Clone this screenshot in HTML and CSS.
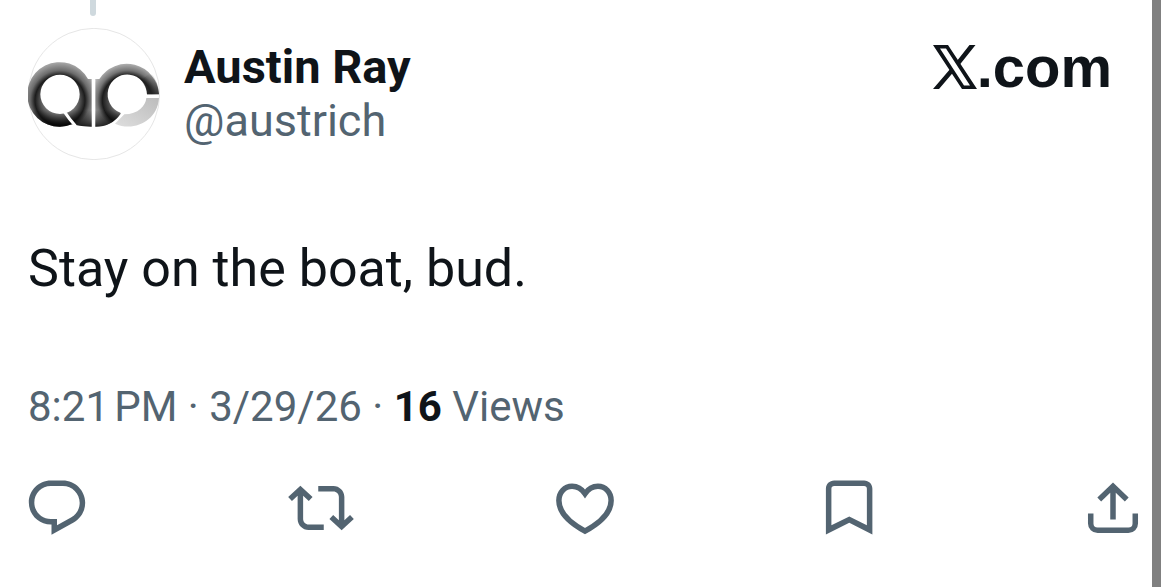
FILE: index.html
```
<!DOCTYPE html>
<html lang="en">
<head>
  <meta charset="UTF-8">
  <meta name="viewport" content="width=device-width, initial-scale=1.0">
  <title>Post</title>
  <link rel="stylesheet" href="styles.css">
</head>
<body>
  <article class="post">
    <div class="thread-line"></div>
    <header class="post-header">
      <svg class="avatar" viewBox="84 84 396 396" aria-hidden="true">
        <defs>
          <radialGradient id="ring-left" gradientUnits="userSpaceOnUse" cx="180" cy="301" r="125">
            <stop offset="0.32" stop-color="#8a8a8a"/>
            <stop offset="0.46" stop-color="#5a5a5a"/>
            <stop offset="0.6" stop-color="#1c1c1c"/>
            <stop offset="0.72" stop-color="#6c6c6c"/>
            <stop offset="0.9" stop-color="#a4a4a4"/>
          </radialGradient>
          <radialGradient id="ring-right" gradientUnits="userSpaceOnUse" cx="382" cy="301" r="125">
            <stop offset="0.32" stop-color="#808080"/>
            <stop offset="0.46" stop-color="#4a4a4a"/>
            <stop offset="0.6" stop-color="#1c1c1c"/>
            <stop offset="0.72" stop-color="#747474"/>
            <stop offset="0.9" stop-color="#b8b8b8"/>
          </radialGradient>
          <linearGradient id="shade" gradientUnits="userSpaceOnUse" x1="0" y1="330" x2="0" y2="382">
            <stop offset="0" stop-color="#000" stop-opacity="0"/>
            <stop offset="1" stop-color="#000" stop-opacity="0.85"/>
          </linearGradient>
          <linearGradient id="shade-side" gradientUnits="userSpaceOnUse" x1="0" y1="220" x2="0" y2="283">
            <stop offset="0" stop-color="#222" stop-opacity="0"/>
            <stop offset="1" stop-color="#222" stop-opacity="0.8"/>
          </linearGradient>
          <linearGradient id="tail" x1="0" y1="1" x2="1" y2="0">
            <stop offset="0" stop-color="#dedede"/>
            <stop offset="1" stop-color="#bcbcbc"/>
          </linearGradient>
          <path id="a" fill-rule="evenodd" d="M275 380V237H264A97 97 0 1 0 216 373Q244 380 275 380ZM239 283A59 59 0 1 1 121 283A59 59 0 1 1 239 283Z"/>
          <path id="c" d="M286 380V237H298A97 97 0 0 1 477 283H441A59 59 0 1 0 361 338L362 341Q335 380 286 380Z"/>
        </defs>
        <circle cx="282" cy="282" r="197" fill="#fff" stroke="#e6e6e6" stroke-width="3"/>
        <use href="#a" fill="url(#ring-left)"/>
        <use href="#a" fill="url(#shade)"/>
        <path fill="none" stroke="#fff" stroke-width="9" d="M193 335Q208 358 226 377"/>
        <use href="#c" fill="url(#ring-right)"/>
        <use href="#c" fill="url(#shade)"/>
        <path fill="url(#shade-side)" d="M422 240Q440 260 441 283H477Q475 245 453 218Z"/>
        <path fill="url(#tail)" d="M477 294H439C437 317 415 343 373 343L345 371C400 396 472 365 477 294Z"/>
      </svg>
      <div class="author">
        <a class="author-name" href="#">Austin Ray</a>
        <a class="author-handle" href="#">@austrich</a>
      </div>
      <a class="brand" href="#" aria-label="X.com">
        <svg class="brand-mark" viewBox="0 0 44 44" aria-hidden="true">
          <path fill-rule="evenodd" d="M0 0H15L44 44H29ZM7 3.5L31 40.5H37L13 3.5Z"/>
          <path d="M36.500 0H42.500L26.500 20L23.500 16.500ZM0 44H6L20.500 27L18 23Z"/>
        </svg>
        <span>.com</span>
      </a>
    </header>
    <p class="post-text">Stay on the boat, bud.</p>
    <p class="post-meta"><time>8:21&#8239;PM · 3/29/26</time> · <strong>16</strong> Views</p>
    <div class="actions">
      <button class="action" type="button" aria-label="Reply">
        <svg viewBox="0 0 24 24"><path d="M1.751 10c0-4.420 3.584-8 8.005-8h4.366c4.490 0 8.129 3.640 8.129 8.130 0 2.960-1.607 5.680-4.196 7.110l-8.054 4.460v-3.690h-.067c-4.490.1-8.183-3.510-8.183-8.010zm8.005-6c-3.317 0-6.005 2.690-6.005 6 0 3.370 2.770 6.080 6.138 6.010l.351-.010h1.761v2.300l5.087-2.810c1.951-1.080 3.163-3.130 3.163-5.360 0-3.390-2.744-6.130-6.129-6.130H9.756z"/></svg>
      </button>
      <button class="action" type="button" aria-label="Repost">
        <svg viewBox="0 0 24 24"><path d="M4.500 3.880l4.432 4.140-1.364 1.460L5.500 7.550V16c0 1.100.896 2 2 2H13v2H7.500c-2.209 0-4-1.790-4-4V7.550L1.432 9.480.068 8.020 4.500 3.880zM16.500 6H11V4h5.500c2.209 0 4 1.790 4 4v8.450l2.068-1.930 1.364 1.460-4.432 4.140-4.432-4.140 1.364-1.460 2.068 1.930V8c0-1.100-.896-2-2-2z"/></svg>
      </button>
      <button class="action" type="button" aria-label="Like">
        <svg class="outline" viewBox="0 0 24 24"><path d="M12 6.800C10.700 4.900 9.100 4.100 7.300 4.100 4.600 4.100 2.500 6.300 2.500 9.300c0 4.600 4.700 8.500 9.500 11.100 4.800-2.600 9.500-6.500 9.500-11.100 0-3-2.100-5.200-4.800-5.200-1.800 0-3.400.8-4.700 2.700z"/></svg>
      </button>
      <button class="action" type="button" aria-label="Bookmark">
        <svg viewBox="0 0 24 24"><path d="M3.600 5c0-1.700 1.300-3 3-3h10.900c1.700 0 3 1.300 3 3v16.600l-8.400-4.200-8.500 4.200V5zm3-1c-.6 0-1 .4-1 1v13.300l6.500-3.200 6.400 3.200V5c0-.6-.4-1-1-1H6.600z"/></svg>
      </button>
      <button class="action" type="button" aria-label="Share">
        <svg class="outline" viewBox="0 0 24 24"><path d="M12 16.200V4.200M7 8.900l5-4.800 5 4.800M3.900 14v3.600c0 1.400 1.100 2.500 2.500 2.500h11.200c1.400 0 2.500-1.100 2.500-2.500V14"/></svg>
      </button>
    </div>
  </article>
</body>
</html>
```

FILE: styles.css
```
* {
  box-sizing: border-box;
  margin: 0;
  padding: 0;
}
body {
  background: #fff;
  color: #0f1419;
  font-family: Roboto, "Liberation Sans", sans-serif;
}
a {
  color: inherit;
  text-decoration: none;
}
.post {
  min-height: 100vh;
  margin-right: 9px;
  padding: 0 6px 0 24px;
  border-right: 9px solid #808080;
}
.thread-line {
  width: 6px;
  height: 16px;
  margin: 0 0 12px 66px;
  border-radius: 0 0 3px 3px;
  background: #cfd9de;
}
.post-header {
  display: flex;
  align-items: flex-start;
  padding: 0 34px 0 4px;
}
.avatar {
  width: 132px;
  height: 132px;
  margin-right: 24px;
}
.author {
  display: flex;
  flex-direction: column;
  flex: 1;
  padding-top: 12px;
  line-height: 54px;
}
.author-name {
  font-size: 47px;
  font-weight: 700;
}
.author-handle {
  color: #536471;
  font-size: 45px;
}
.brand {
  display: flex;
  align-items: center;
  padding-top: 12px;
  font-family: "Liberation Sans", Arial, sans-serif;
  font-size: 58px;
  font-weight: 700;
  line-height: 54px;
}
.brand-mark {
  width: 44px;
  height: 44px;
  fill: #0f1419;
}
.post-text {
  padding: 77px 4px 0;
  font-size: 52px;
  line-height: 64px;
}
.post-meta {
  padding: 79px 4px 0;
  color: #536471;
  font-size: 42px;
  line-height: 54px;
}
.post-meta strong {
  color: #0f1419;
}
.actions {
  display: flex;
  justify-content: space-between;
  padding-top: 41px;
}
.action {
  border: 0;
  background: none;
  cursor: pointer;
}
.action svg {
  display: block;
  width: 66px;
  height: 66px;
  fill: #536471;
}
.action .outline {
  fill: none;
  stroke: #536471;
  stroke-width: 2;
}
```
